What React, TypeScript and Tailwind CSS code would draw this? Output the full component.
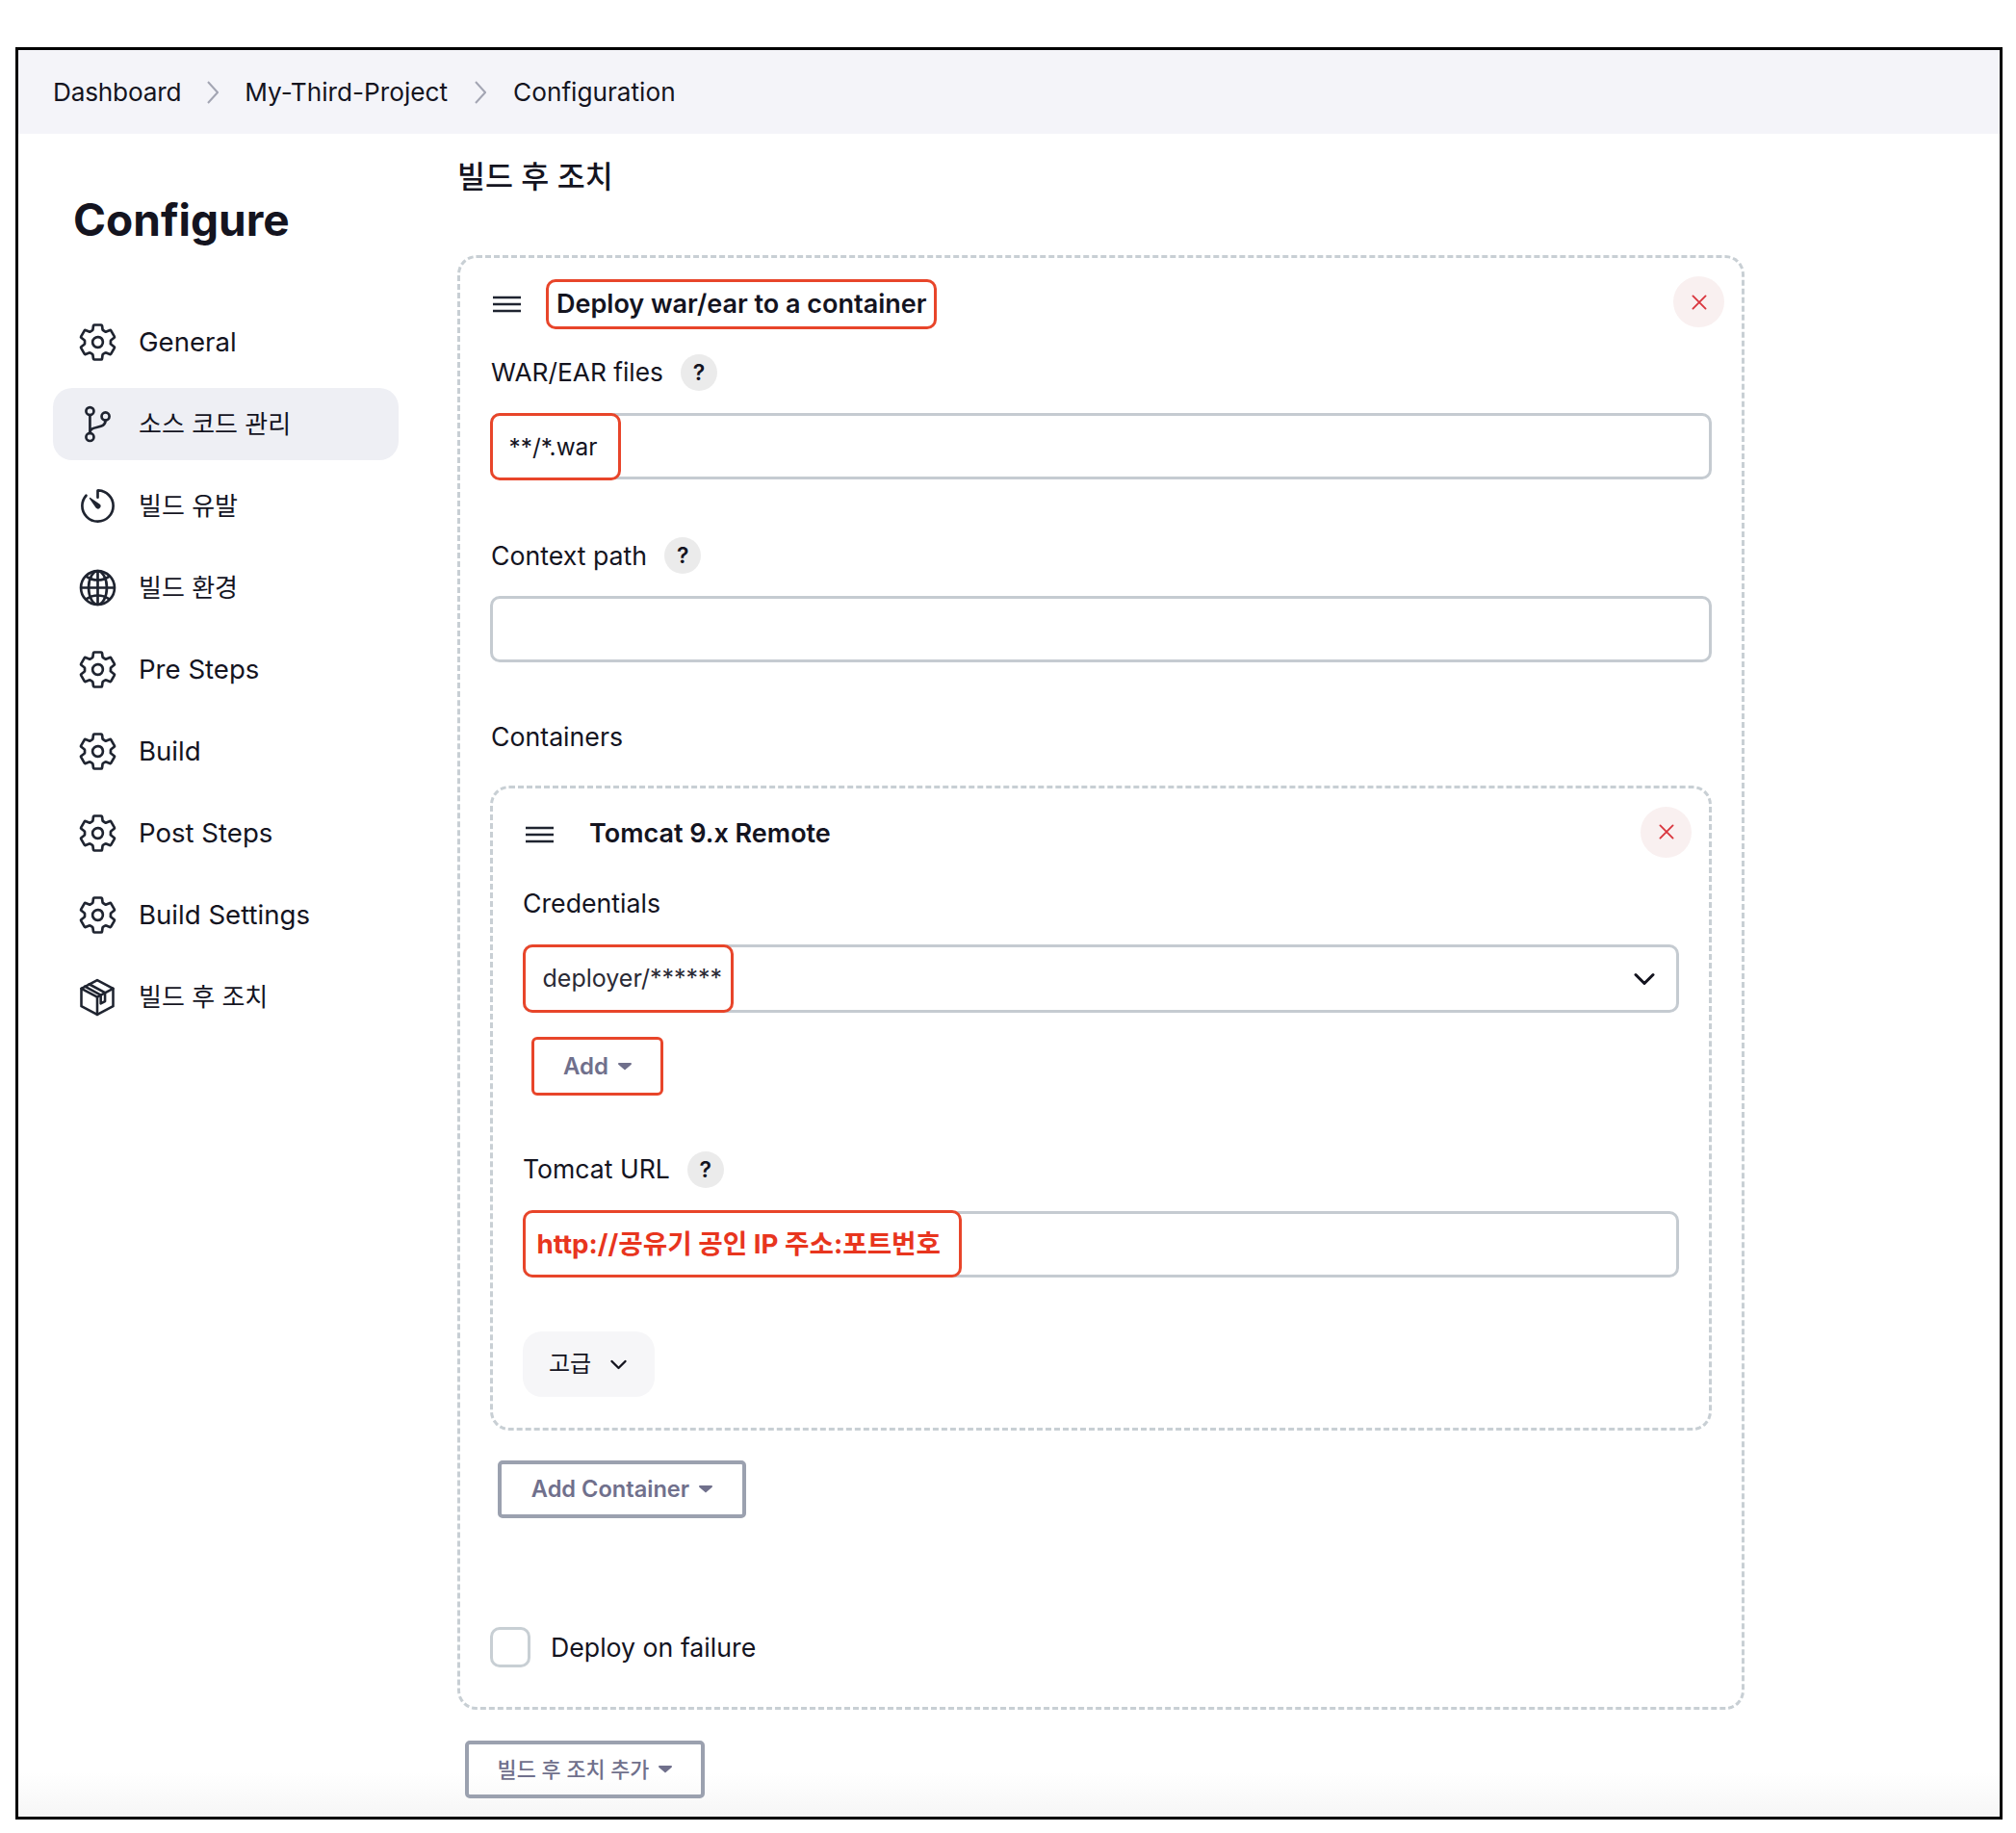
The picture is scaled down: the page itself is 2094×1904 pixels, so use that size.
import { ReactNode } from "react";
import {
  IoSettingsOutline,
  IoGitBranchOutline,
  IoTimerOutline,
  IoGlobeOutline,
  IoCloseOutline,
  IoChevronDown,
} from "react-icons/io5";

function PackageIcon() {
  return (
    <svg viewBox="0 0 24 24" className="h-[44px] w-[44px]" fill="none" stroke="#1f2430" strokeWidth="1.4" strokeLinejoin="round" strokeLinecap="round">
      <path d="M12 2.2 21 7v10l-9 4.8L3 17V7z" />
      <path d="M3 7l9 4.8L21 7" />
      <path d="M12 11.8v10" />
      <path d="M7.4 4.5l9 4.9v4.8l-2.4 1.3v-4.8l-9-4.9" />
    </svg>
  );
}

const navItems: { label: string; icon: ReactNode; active?: boolean; ko?: boolean }[] = [
  { label: "General", icon: <IoSettingsOutline /> },
  { label: "소스 코드 관리", icon: <IoGitBranchOutline />, active: true, ko: true },
  { label: "빌드 유발", icon: <IoTimerOutline />, ko: true },
  { label: "빌드 환경", icon: <IoGlobeOutline />, ko: true },
  { label: "Pre Steps", icon: <IoSettingsOutline /> },
  { label: "Build", icon: <IoSettingsOutline /> },
  { label: "Post Steps", icon: <IoSettingsOutline /> },
  { label: "Build Settings", icon: <IoSettingsOutline /> },
  { label: "빌드 후 조치", icon: <PackageIcon />, ko: true },
];

function Handle() {
  return (
    <svg viewBox="0 0 30 18" className="h-[18px] w-[29px]" stroke="#1f2430" strokeWidth="2.6" preserveAspectRatio="none">
      <path d="M0 2h30M0 9h30M0 16h30" />
    </svg>
  );
}

function CloseButton() {
  return (
    <button className="-mr-[13px] -mt-[5px] flex h-[53px] w-[53px] shrink-0 items-center justify-center rounded-full bg-[#f9f0f0] text-[30px] text-[#d9363e]">
      <IoCloseOutline />
    </button>
  );
}

function Label({ text, help, gap = "ml-[18px]", size = "text-[26.7px]" }: { text: string; help?: boolean; gap?: string; size?: string }) {
  return (
    <div className={`flex h-[40px] items-center text-[#14141f] ${size}`}>
      {text}
      {help && (
        <span className={`flex h-[38px] w-[38px] items-center justify-center rounded-full bg-[#ebebeb] text-[23px] font-semibold text-[#14141f] ${gap}`}>
          ?
        </span>
      )}
    </div>
  );
}

function Caret() {
  return (
    <svg viewBox="0 0 14 8" className="h-[8px] w-[14px]" fill="currentColor">
      <path d="M1 0h12a1 1 0 0 1 .7 1.7L7 7.6.3 1.7A1 1 0 0 1 1 0z" />
    </svg>
  );
}

function OutlineButton({ text, className }: { text: string; className: string }) {
  return (
    <button className={`flex h-[60px] items-center justify-center gap-[10px] rounded-[5px] border-[4px] border-[#9ba1af] text-[#70708c] ${className}`}>
      {text}
      <Caret />
    </button>
  );
}

const redBox = "-my-[3.5px] -ml-[3.5px] flex items-center rounded-[10px] border-[3.5px] border-[#e8452a] bg-white";
const field = "rounded-[10px] border-[3.5px] border-[#c5cbd1]";

export default function App() {
  return (
    <div className="h-[1904px] bg-white pl-[16px] pr-[14px] pt-[49px] font-[family-name:Inter,'Noto_Sans_CJK_KR',sans-serif] text-[#14141f]">
      <div className="h-[1841px] overflow-hidden border-[3.5px] border-black bg-[linear-gradient(to_bottom,#ffffff_97.5%,#f6f6f6_100%)]">
        <header className="flex h-[87px] items-center bg-[#f4f4f9] pl-[36px] text-[26.2px]">
          <span className="tracking-[-0.2px]">Dashboard</span>
          <svg viewBox="0 0 12 24" className="ml-[27px] mr-[27px] h-[24px] w-[12px]" fill="none" stroke="#a3a5b3" strokeWidth="2"><path d="M1 1l10 11L1 23" /></svg>
          <span>My-Third-Project</span>
          <svg viewBox="0 0 12 24" className="ml-[28px] mr-[28px] h-[24px] w-[12px]" fill="none" stroke="#a3a5b3" strokeWidth="2"><path d="M1 1l10 11L1 23" /></svg>
          <span>Configuration</span>
        </header>

        <div className="flex">
          <aside className="ml-[36px] w-[359px] shrink-0">
            <h1 className="ml-[21px] mt-[59px] h-[60px] text-[46px] font-bold leading-[60px]">Configure</h1>
            <nav className="mt-[60px] flex flex-col gap-[10px]">
              {navItems.map((item) => (
                <div
                  key={item.label}
                  className={`flex h-[75px] items-center gap-[25px] rounded-[20px] pl-[28px] font-[440] ${item.ko ? "text-[26px]" : "text-[27.6px]"} ${item.active ? "bg-[#eeeff4]" : ""}`}
                >
                  <span className="flex h-[38px] w-[36px] items-center justify-center text-[43px] text-[#1f2430] [&>svg]:shrink-0">{item.icon}</span>
                  <span>{item.label}</span>
                </div>
              ))}
            </nav>
          </aside>

          <main className="ml-[61px] w-[1337px] shrink-0">
            <h2 className="mt-[25px] h-[40px] text-[31.5px] font-medium leading-[40px]">빌드 후 조치</h2>

            <section className="mt-[61px] rounded-[20px] border-[3.5px] border-dashed border-[#c8cfd4] pb-[41px] pl-[31px] pr-[31px] pt-[22px]">
              <div className="flex h-[52px] items-center">
                <span className="ml-[3px] mr-[26px]"><Handle /></span>
                <span className="flex h-[52px] items-center rounded-[10px] border-[3.5px] border-[#e8452a] px-[8px] text-[27px] font-semibold">
                  Deploy war/ear to a container
                </span>
                <span className="flex-1" />
                <CloseButton />
              </div>

              <div className="mt-[25px] pl-[1px]"><Label text="WAR/EAR files" help gap="ml-[18px]" size="text-[26.3px]" /></div>
              <div className={`mt-[22px] flex h-[69px] ${field}`}>
                <div className={`${redBox} w-[136px] pl-[17px] pt-[2px] text-[24.4px]`}>**/*.war</div>
              </div>

              <div className="mt-[59px] pl-[1px]"><Label text="Context path" help /></div>
              <div className={`mt-[22px] h-[69px] ${field}`} />

              <div className="mt-[57px] pl-[1px]"><Label text="Containers" /></div>

              <div className="mt-[31px] rounded-[20px] border-[3.5px] border-dashed border-[#c8cfd4] pb-[32px] pl-[31px] pr-[31px] pt-[21px]">
                <div className="flex h-[53px] items-center">
                  <span className="ml-[3px] mr-[37px]"><Handle /></span>
                  <span className="text-[27px] font-semibold">Tomcat 9.x Remote</span>
                  <span className="flex-1" />
                  <CloseButton />
                </div>

                <div className="mt-[25px]"><Label text="Credentials" /></div>
                <div className={`mt-[23px] flex h-[71px] items-center pr-[17px] ${field}`}>
                  <div className={`${redBox} h-[71px] w-[219px] pl-[18px] text-[25px] text-[#2a2a35]`}>deployer/******</div>
                  <span className="flex-1" />
                  <IoChevronDown className="text-[32px] text-[#14141f]" />
                </div>

                <button className="ml-[9px] mt-[25px] flex h-[61px] w-[137px] items-center justify-center gap-[10px] rounded-[6px] border-[3.5px] border-[#e8452a] text-[24px] font-semibold text-[#70708c]">
                  Add
                  <Caret />
                </button>

                <div className="mt-[57px]"><Label text="Tomcat URL" help size="text-[26.6px]" /></div>
                <div className={`mt-[22.5px] flex h-[69px] ${field}`}>
                  <div className={`${redBox} w-[456px] pl-[12px] pt-[2px] text-[27.7px] font-bold text-[#e8351e]`}>http://공유기 공인 IP 주소:포트번호</div>
                </div>

                <button className="mt-[56.5px] flex h-[68px] w-[137px] items-center justify-center gap-[16px] rounded-[20px] bg-[#f6f6f8] text-[24px]">
                  <span className="pl-[2px]">고급</span>
                  <IoChevronDown className="text-[25px]" />
                </button>
              </div>

              <OutlineButton text="Add Container" className="ml-[8px] mt-[31px] w-[258px] text-[23.6px] font-semibold" />

              <div className="mt-[113px] flex items-center gap-[21px] text-[26.7px]">
                <span className="h-[42px] w-[42px] rounded-[10px] border-[3.5px] border-[#c8cfd4]" />
                Deploy on failure
              </div>
            </section>

            <OutlineButton text="빌드 후 조치 추가" className="ml-[8px] mt-[32px] w-[249px] text-[21.8px] font-medium" />
          </main>
        </div>
      </div>
    </div>
  );
}
